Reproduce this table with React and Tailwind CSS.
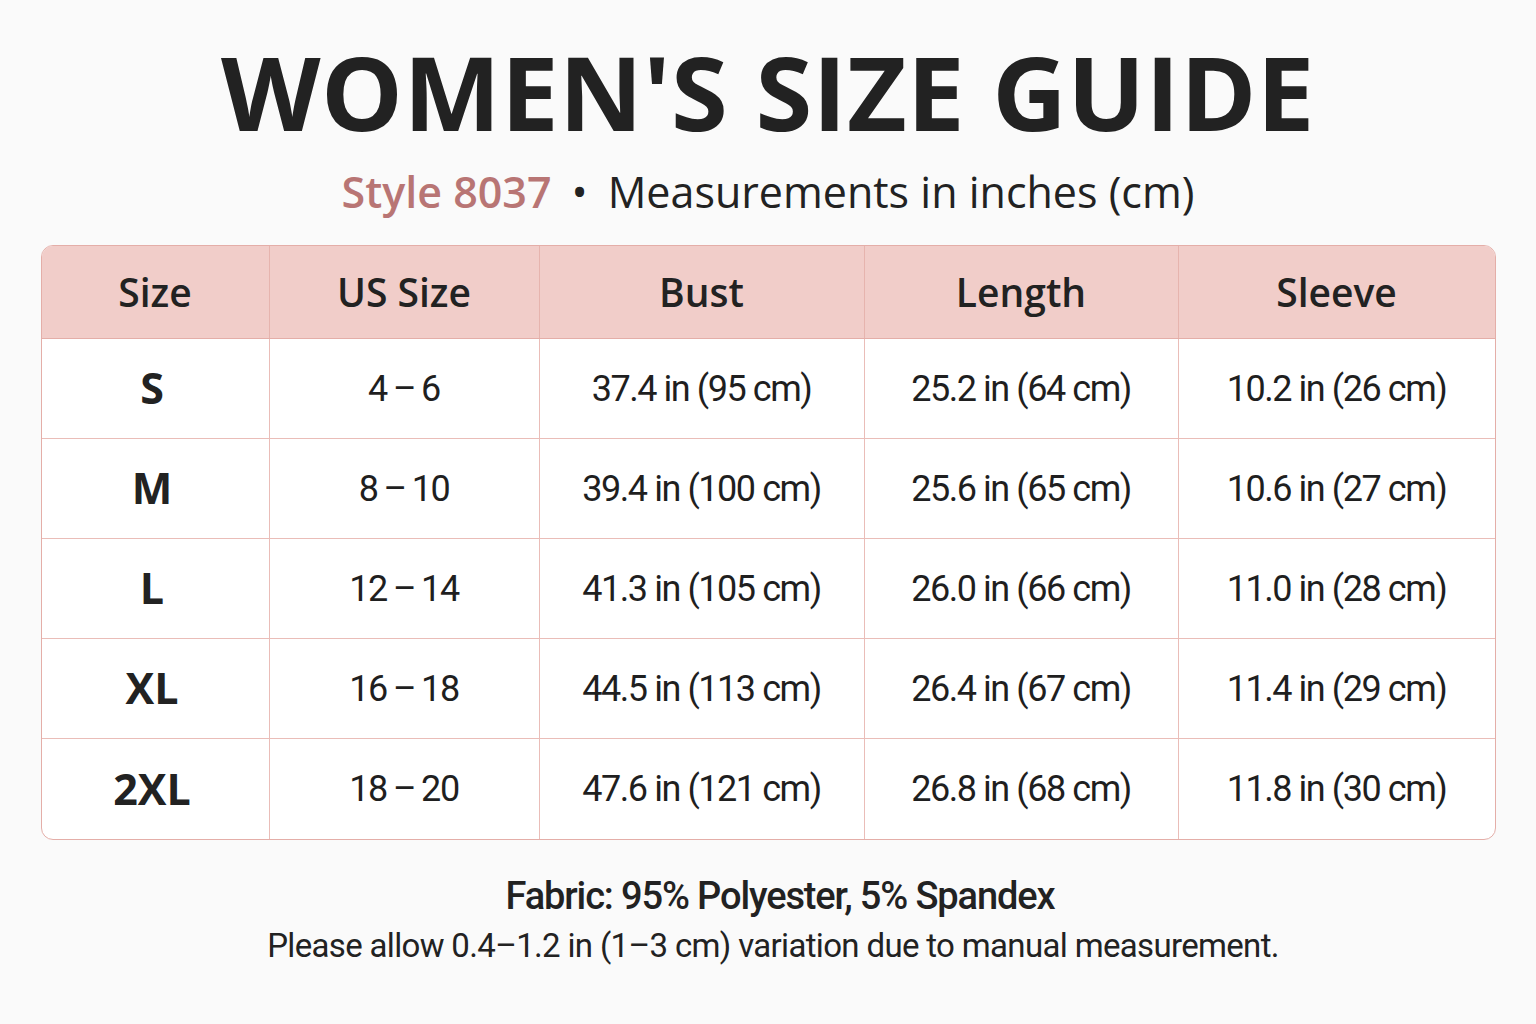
const rows = [
  ["S", "4–6", "37.4 in (95 cm)", "25.2 in (64 cm)", "10.2 in (26 cm)"],
  ["M", "8–10", "39.4 in (100 cm)", "25.6 in (65 cm)", "10.6 in (27 cm)"],
  ["L", "12–14", "41.3 in (105 cm)", "26.0 in (66 cm)", "11.0 in (28 cm)"],
  ["XL", "16–18", "44.5 in (113 cm)", "26.4 in (67 cm)", "11.4 in (29 cm)"],
  ["2XL", "18–20", "47.6 in (121 cm)", "26.8 in (68 cm)", "11.8 in (30 cm)"],
];

const heads = ["Size", "US Size", "Bust", "Length", "Sleeve"];

function Range({ text }) {
  const [a, b] = text.split("–");
  return (
    <span>
      {a}
      <span className="mx-[6px]">–</span>
      {b}
    </span>
  );
}

export default function App() {
  return (
    <div className="w-[1536px] h-[1024px] bg-[#fafafa] flex flex-col items-center text-[#1f1f1f] font-['Open_Sans',sans-serif]">
      <h1 className="mt-[20px] text-[103px] leading-[142px] font-bold tracking-[0.004em] text-[#222]">
        WOMEN'S SIZE GUIDE
      </h1>
      <p className="text-[43px] leading-[59px] text-[#222]">
        <span className="font-semibold text-[#b87574]">Style 8037</span>
        <span className="mx-[20px]">•</span>
        Measurements in inches (cm)
      </p>

      <div className="mt-[24px] w-[1455px] rounded-[12px] border border-[#e4aea8] overflow-hidden bg-white">
        <div className="grid grid-cols-[228px_270px_325px_314px_1fr] h-[93px] bg-[#f1cdc9] border-b border-[#e4aea8]">
          {heads.map((h, i) => (
            <div
              key={h}
              className={`flex items-center justify-center text-[39px] font-semibold text-[#222] ${i < 4 ? "border-r border-[#e6b4ae]" : ""}`}
            >
              {h}
            </div>
          ))}
        </div>
        {rows.map((r, ri) => (
          <div
            key={r[0]}
            className={`grid grid-cols-[228px_270px_325px_314px_1fr] h-[100px] ${ri < rows.length - 1 ? "border-b border-[#eabdb8]" : ""}`}
          >
            {r.map((c, i) => (
              <div
                key={i}
                className={`flex items-center justify-center ${i < 4 ? "border-r border-[#eabdb8]" : ""} ${
                  i === 0
                    ? "pr-[6px] text-[43px] font-bold text-[#222]"
                    : "font-['Roboto',sans-serif] text-[36px] tracking-[-0.04em] text-[#1f1f1f]"
                }`}
              >
                {i === 1 ? <Range text={c} /> : c}
              </div>
            ))}
          </div>
        ))}
      </div>

      <p className="mt-[34px] pl-[24px] font-['Roboto',sans-serif] text-[38px] leading-[44px] font-medium tracking-[-0.03em] text-[#222]">
        Fabric: 95% Polyester, 5% Spandex
      </p>
      <p className="mt-[6px] pl-[10px] font-['Roboto',sans-serif] text-[33px] leading-[44px] tracking-[-0.02em] text-[#222]">
        Please allow 0.4–1.2 in (1–3 cm) variation due to manual measurement.
      </p>
    </div>
  );
}
